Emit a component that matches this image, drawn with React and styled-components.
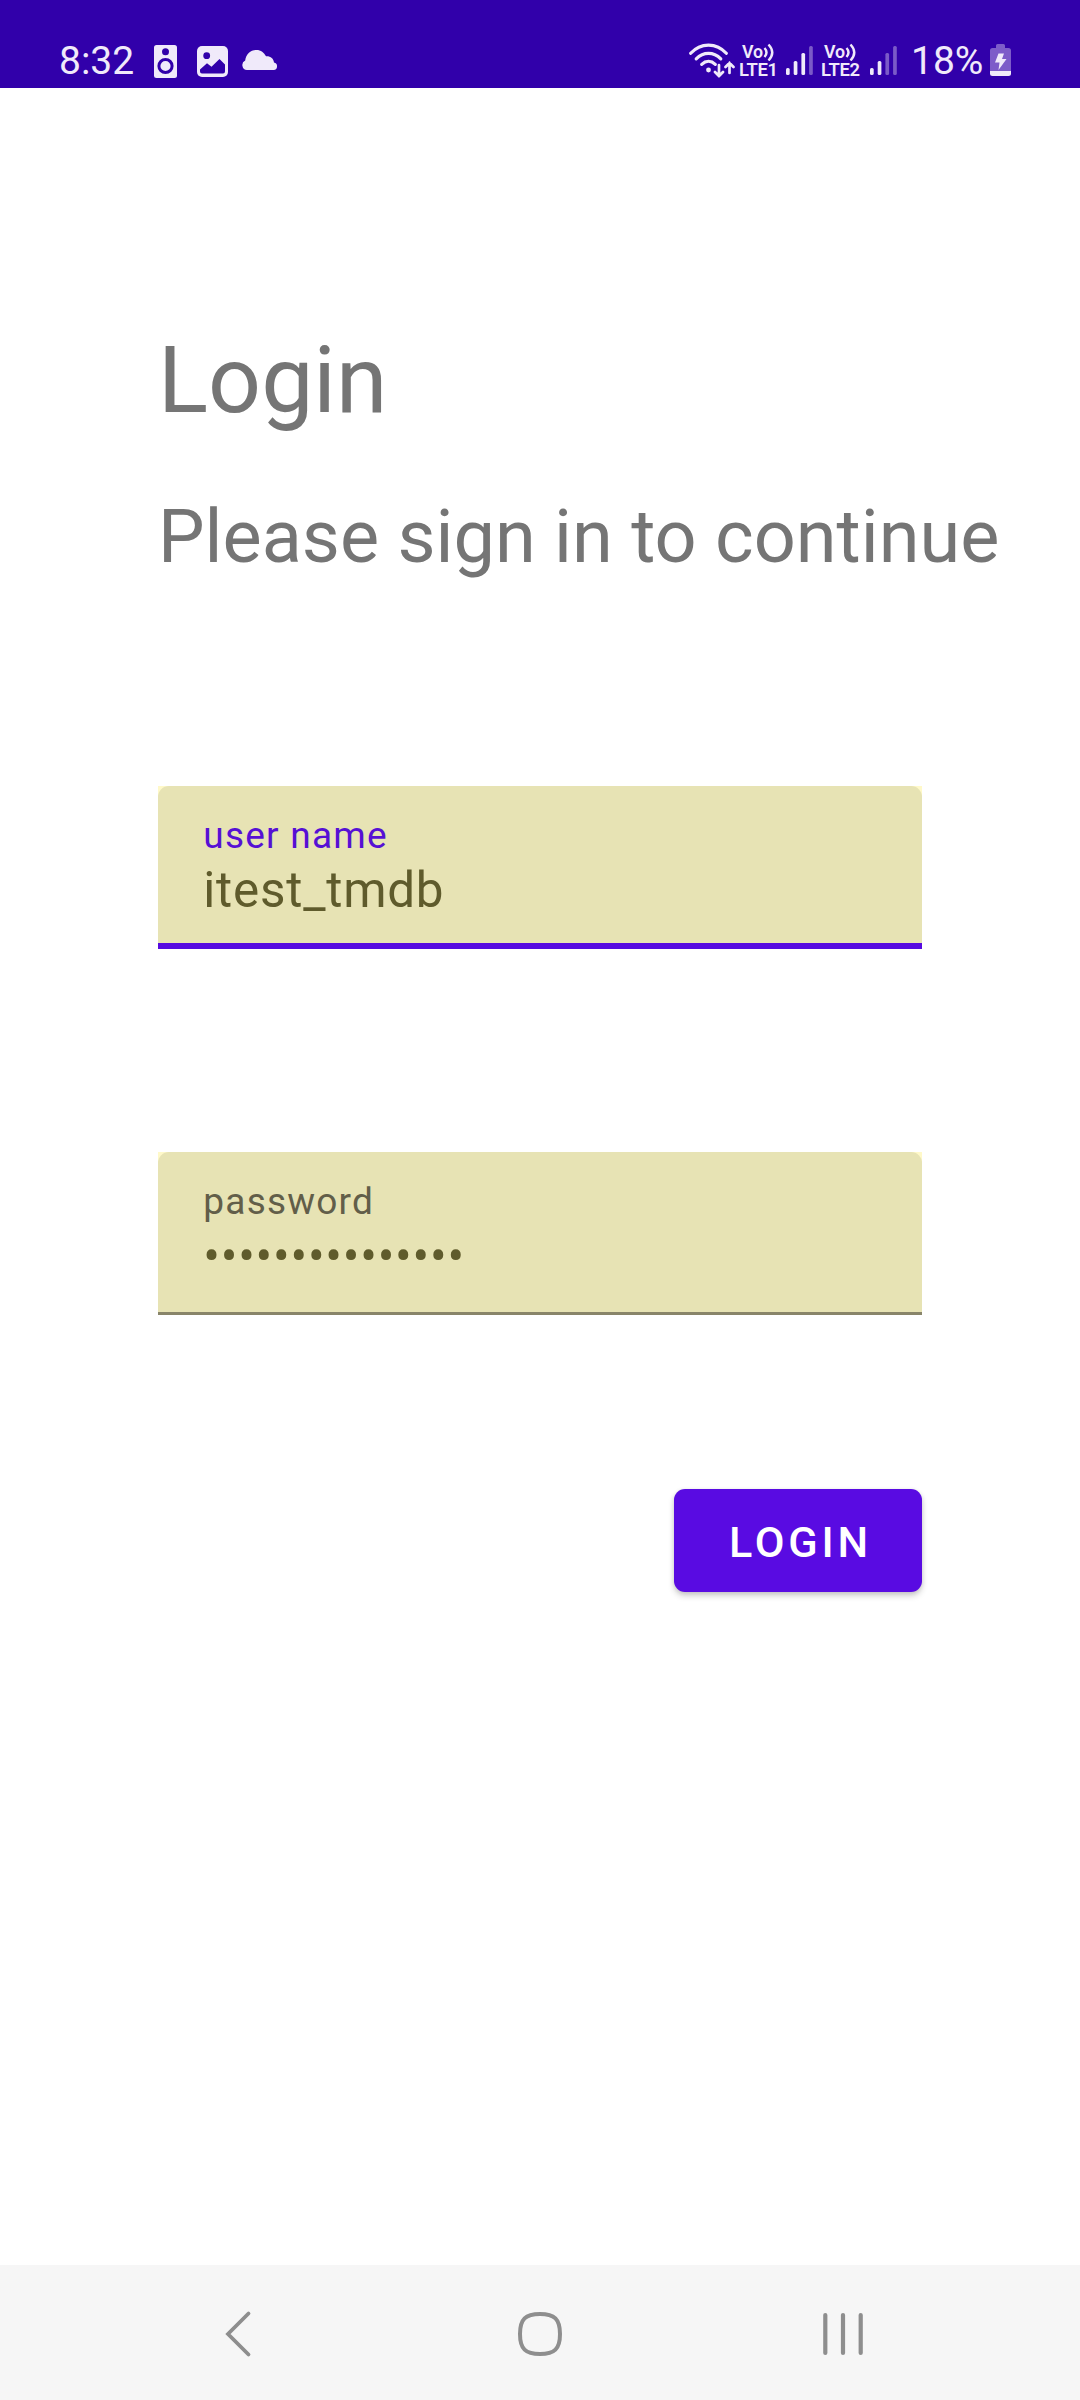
import React from "react";
import styled, { createGlobalStyle } from "styled-components";

const GlobalStyle = createGlobalStyle`
  *, *::before, *::after { box-sizing: border-box; }
  body {
    margin: 0;
    background: #fff;
    font-family: Roboto, "Liberation Sans", sans-serif;
  }
  svg { display: block; flex: none; }
`;

const Screen = styled.div`
  width: 1080px;
  height: 2400px;
  display: flex;
  flex-direction: column;
  overflow: hidden;
  background: #fff;
`;

const StatusBar = styled.header`
  height: 88px;
  flex: none;
  display: flex;
  justify-content: space-between;
  align-items: flex-start;
  padding: 36px 69px 0 59px;
  background: #3100aa;
  color: #f0eafa;
`;

const StatusGroup = styled.div`
  display: flex;
  align-items: flex-start;
`;

const StatusText = styled.span`
  width: ${(p) => p.$width}px;
  margin-left: ${(p) => p.$gap || 0}px;
  padding-top: 1px;
  font-size: 39px;
  line-height: 48px;
  white-space: nowrap;
`;

const Network = styled.div`
  width: 44px;
  margin-left: ${(p) => p.$gap}px;
  padding-top: 7px;
  display: flex;
  flex-direction: column;
  font-weight: 600;
  font-size: 18.4px;
  line-height: 18px;
  letter-spacing: -0.3px;
  white-space: nowrap;
`;

const NetworkTop = styled.div`
  display: flex;
  padding-left: 3px;
  height: 18px;
  font-size: 17.8px;
  letter-spacing: -0.2px;
`;

const Icon = styled.svg`
  margin-left: ${(p) => p.$gap || 0}px;
  margin-top: ${(p) => p.$top || 0}px;
`;

const Main = styled.main`
  flex: 1;
  display: flex;
  flex-direction: column;
  padding: 238px 158px 0;
`;

const Title = styled.h1`
  margin: 0;
  font-weight: 400;
  font-size: 93px;
  line-height: 110px;
  color: #757575;
`;

const Subtitle = styled.p`
  margin: 57px 0 0;
  font-size: 73.85px;
  line-height: 87px;
  color: #757575;
  white-space: nowrap;
`;

const FieldFrame = styled.div`
  margin-top: ${(p) => p.$gap}px;
  height: 163px;
  background: #fff9c9;
`;

const FieldBody = styled.label`
  height: 163px;
  display: flex;
  flex-direction: column;
  padding: 28px 45.3px 0;
  border-radius: 11px 11px 0 0;
  background: #e7e3b4;
  box-shadow: inset 0 ${(p) => (p.$focused ? "-6px #560be0" : "-3px #89856a")};
`;

const FieldLabel = styled.span`
  font-size: 37px;
  line-height: 44px;
  letter-spacing: 1.22px;
  color: ${(p) => (p.$focused ? "#5610d4" : "#625e49")};
`;

const FieldValue = styled.span`
  margin-top: 3px;
  font-size: 49.4px;
  line-height: 58px;
  letter-spacing: 0.77px;
  color: #5f5b2c;
`;

const LoginButton = styled.button`
  align-self: flex-end;
  width: 248px;
  height: 103px;
  margin-top: 174px;
  padding: 4px 0 0 5px;
  border: 0;
  border-radius: 11px;
  background: #590be2;
  box-shadow: 0 4px 6px rgba(0, 0, 0, 0.18), 0 1px 4px rgba(0, 0, 0, 0.1);
  color: #fff;
  font: 500 43.2px/52px Roboto, "Liberation Sans", sans-serif;
  letter-spacing: 3.8px;
`;

const NavBar = styled.nav`
  height: 135px;
  flex: none;
  display: flex;
  align-items: flex-start;
  justify-content: space-between;
  padding: 44px 214px 0 214px;
  background: #f6f6f6;
`;

const Speaker = () => (
  <Icon $gap={20} $top={9} width="23" height="33" viewBox="0 0 23 33">
    <rect width="23" height="33" rx="2.5" fill="#f0eafa" />
    <circle cx="11.5" cy="6.7" r="3.5" fill="#3100aa" />
    <circle cx="11.5" cy="21" r="6.6" fill="#f0eafa" stroke="#3100aa" strokeWidth="3" />
  </Icon>
);

const Picture = () => (
  <Icon $gap={20} $top={10} width="31" height="31" viewBox="0 0 31 31">
    <rect width="31" height="31" rx="5" fill="#f0eafa" />
    <circle cx="9.7" cy="9.7" r="3.4" fill="#3100aa" />
    <path d="M3 23.5 10 17.2 14.5 20.7 22.5 13 28 18.5V25.5Q28 27.5 26 27.5H5Q3 27.5 3 25.5Z" fill="#3100aa" />
  </Icon>
);

const Cloud = () => (
  <Icon $gap={14} $top={14} width="36" height="20" viewBox="0 0 36 20">
    <path d="M5 20A5 5 0 0 1 3.2 10.5C4 4 8.5 0 14.5 0C19 0 22 2.5 24 6.3C28.5 6 31.5 8.5 32 12.5A3.8 3.8 0 0 1 31.7 20Z" fill="#f0eafa" />
  </Icon>
);

const Wifi = () => (
  <Icon $top={7} width="46" height="36" viewBox="0 0 46 36" fill="none" stroke="#f0eafa" strokeWidth="3.2" strokeLinecap="round">
    <path d="M1.7 10.3C11.5 -.7 27.5 -.7 37.3 10.3" />
    <path d="M7.2 15.8C14.5 8.5 24.5 8.5 31.8 15.8" />
    <path d="M12.7 21.3C16.8 17.5 22.2 17.5 26.3 21.3" />
    <circle cx="19.5" cy="27" r="2.4" fill="#f0eafa" stroke="none" />
    <path d="M30 22V33M26 29 30 33 34 29M40.5 30V20M36.5 24 40.5 20 44.5 24" strokeWidth="2.7" />
  </Icon>
);

const Waves = () => (
  <svg width="12" height="18" viewBox="0 0 12 18" fill="none" stroke="#f0eafa" strokeWidth="2.4">
    <path d="M1.5 5Q5.5 9.5 1.5 14M5.5 1.5Q13 9.5 5.5 17.5" />
  </svg>
);

const Carrier = ({ name, gap }) => (
  <Network $gap={gap}>
    <NetworkTop>Vo<Waves /></NetworkTop>
    <span>{name}</span>
  </Network>
);

const BARS = [
  [0, 22, 7],
  [7.7, 15, 14],
  [15.4, 7, 22],
  [23.1, 0, 29],
];

const Signal = ({ level, gap }) => (
  <Icon $gap={gap} $top={10} width="27" height="29" viewBox="0 0 27 29">
    {BARS.map(([x, y, h], i) => (
      <rect key={x} x={x} y={y} width="3.7" height={h} rx="1.5" fill={i < level ? "#f0eafa" : "#7b5ac8"} />
    ))}
  </Icon>
);

const Battery = () => (
  <Icon $gap={4} $top={8} width="21" height="32" viewBox="0 0 21 32">
    <path d="M6 4V1.5Q6 0 7.5 0H13.5Q15 0 15 1.5V4H18.5Q21 4 21 6.5V27H0V6.5Q0 4 2.5 4Z" fill="#7d5cc9" />
    <path d="M0 27H21V29.5Q21 32 18.5 32H2.5Q0 32 0 29.5Z" fill="#f0eafa" />
    <path d="M8.5 9.5H14L12 15H16.5L8.5 26L9.5 18.5H5Z" fill="#f0eafa" />
  </Icon>
);

const Field = ({ label, value, focused, gap }) => (
  <FieldFrame $gap={gap}>
    <FieldBody $focused={focused}>
      <FieldLabel $focused={focused}>{label}</FieldLabel>
      <FieldValue>{value}</FieldValue>
    </FieldBody>
  </FieldFrame>
);

export default function App() {
  return (
    <>
      <GlobalStyle />
      <Screen>
        <StatusBar>
          <StatusGroup>
            <StatusText $width={75}>8:32</StatusText>
            <Speaker />
            <Picture />
            <Cloud />
          </StatusGroup>
          <StatusGroup>
            <Wifi />
            <Carrier name="LTE1" gap={4} />
            <Signal level={3} gap={3} />
            <Carrier name="LTE2" gap={8} />
            <Signal level={2} gap={5} />
            <StatusText $width={75} $gap={14}>18%</StatusText>
            <Battery />
          </StatusGroup>
        </StatusBar>
        <Main>
          <Title>Login</Title>
          <Subtitle>Please sign in to continue</Subtitle>
          <Field label="user name" value="itest_tmdb" focused gap={206} />
          <Field label="password" value={"•".repeat(15)} gap={203} />
          <LoginButton type="button">LOGIN</LoginButton>
        </Main>
        <NavBar>
          <svg width="48" height="50" viewBox="0 0 48 50" fill="none" stroke="#8e8e8e" strokeWidth="3.8" strokeLinecap="round">
            <path d="M34.5 4.5 14 25 34.5 45.5" />
          </svg>
          <svg width="48" height="50" viewBox="0 0 48 50" fill="none" stroke="#8e8e8e" strokeWidth="4">
            <path d="M24 5C38.5 5 44 10 44 25S38.5 45 24 45S4 40 4 25S9.5 5 24 5Z" />
          </svg>
          <svg width="48" height="50" viewBox="0 0 48 50" fill="none" stroke="#8e8e8e" strokeWidth="4.2" strokeLinecap="round">
            <path d="M7.3 6V44M25 6V44M42.7 6V44" />
          </svg>
        </NavBar>
      </Screen>
    </>
  );
}
